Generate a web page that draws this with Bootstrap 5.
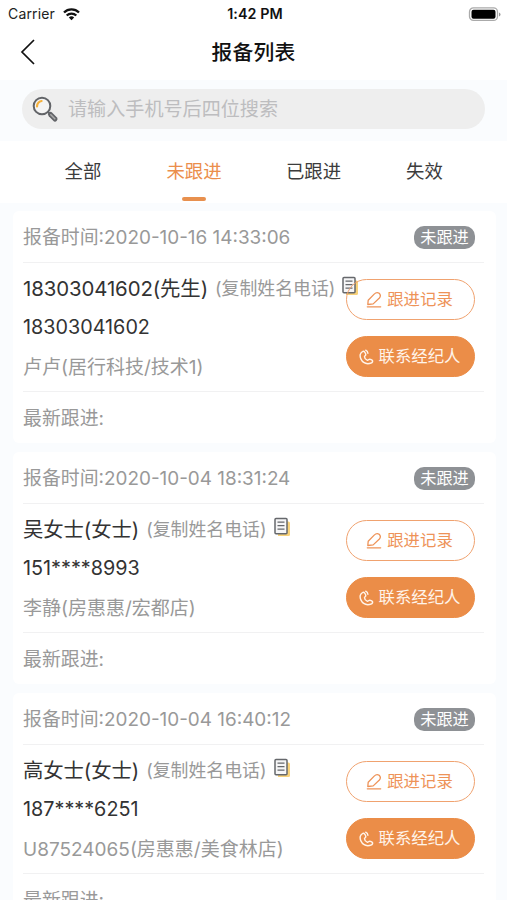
<!DOCTYPE html>
<html lang="zh-CN">
<head>
<meta charset="utf-8">
<meta name="viewport" content="width=device-width, initial-scale=1">
<title>报备列表</title>
<link href="https://cdn.jsdelivr.net/npm/bootstrap@5.3.0/dist/css/bootstrap.min.css" rel="stylesheet">
<style>
body{font-family:Inter,"Noto Sans CJK SC",sans-serif;background:#fafcfe;color:#333;height:900px;overflow:hidden}
.status{height:28px;padding:0 6px 0 8px;font-size:14px;line-height:28px;color:#222}
.status>*{flex:1}
.carrier{letter-spacing:.15px}
.clock{font-weight:600;font-size:14.3px;color:#111;letter-spacing:.1px;padding-left:1px}
.titlebar{height:52px;padding-left:20px;padding-right:52px}
.titlebar h1{font-size:20.8px;font-weight:500;color:#111;line-height:48px;letter-spacing:.2px;margin-top:-2px!important}
.titlebar svg{margin-top:-4px}
.search-wrap{height:61px;padding:9px 22px 0}
.search-box{height:40px;background:#eee;padding-left:10px;color:#bdbdbf;font-size:19.1px}
.search-box span{margin-left:9px}
.tabs{height:62px;font-size:18.4px;color:#3c3c3c;padding:0 32px 0 23px}
.tabs a{height:62px;color:inherit;line-height:60px}
.tabs a.on{color:#eb8e4c}
.tabs a.on::after{content:"";position:absolute;left:50%;bottom:2px;margin-left:-12px;width:24px;height:4px;border-radius:2px;background:#e8904e}
.list{padding:8px 11px 0 13px;gap:9px}
.report{height:232px;padding:0 12px 0 10px;border:0;border-radius:6px;flex:none}
.report-head{height:52px;border-bottom:1px solid #f1f1f2;font-size:18.9px;line-height:28px;color:#999;padding:2px 9px 0 0}
.tag{width:61px;height:23px;border-radius:10px;background:#8e9195;color:#fff;font-size:16.2px;line-height:23px;margin-top:-1px}
.report-body{height:129px;border-bottom:1px solid #f1f1f2;padding:6px 9px 0 0}
.line{height:39px;line-height:39px;font-size:19.8px;white-space:nowrap}
.who{font-size:20.4px;line-height:40px;letter-spacing:-.1px}
.copy{font-size:17.9px;letter-spacing:0;color:#999;margin-left:7px}
.line svg{margin:7px 0 0 7px}
.agent{font-size:19px;line-height:41px;color:#999}
.report-foot{height:51px;line-height:53px;font-size:18.9px;color:#999}
.info{width:323px}
.acts{gap:16px;padding-top:10px}
.pill{width:129px;height:41px;border-radius:21px;font-size:16.4px;padding:0 2px 0 0;border-width:1.5px;--bs-btn-color:#ee9358;--bs-btn-border-color:#f0a26f;--bs-btn-hover-color:#ee9358;gap:5px}
.pill-fill{background:#eb8d48;--bs-btn-color:#fff4ea;--bs-btn-border-color:#eb8d48}
svg{display:block;flex:none}
</style>
</head>
<body>
<svg width="0" height="0" class="position-absolute" aria-hidden="true">
<symbol id="i-copy" viewBox="0 0 17 20"><path d="M4 4.500h10.500a1.500 1.500 0 0 1 1.500 1.500v11.500a1.500 1.500 0 0 1-1.500 1.500H4z" fill="#f8d27a"/><rect x="1" y="1.500" width="12" height="15.300" rx="1" fill="#f6f6f7" stroke="#66686c" stroke-width="1.500"/><path d="M3.500 5.200h7M3.500 8.700h7M3.500 12.200h7" stroke="#66686c" stroke-width="1.300"/></symbol>
<symbol id="i-pen" viewBox="0 0 16 17"><path d="M1.800 13.500L2.200 9.300 8.200 3.100Q10.700.5 13.200 2.300 15.400 4.600 13.400 7L7.200 12.900zM1.300 15.800h13.400" fill="none" stroke="currentColor" stroke-width="1.300" stroke-linecap="round" stroke-linejoin="round"/></symbol>
<symbol id="i-tel" viewBox="0 0 15 16"><path d="M3.900 2.300C1 3.500.5 7 1.900 9.900c1.600 3.400 5 5.200 8.600 4.600 2-.3 3.200-1.700 3.100-2.600-.2-1-2.400-2-3.400-1.600-.8.300-1.100 1.200-2 .9C7 10.700 5.600 9 5.500 7.700c0-.8 1.300-1.100 1.300-2C6.800 4.500 5.400 1.700 3.900 2.300zM6.700 1.200c1.400.7 2.100 1.700 2.200 3" fill="none" stroke="currentColor" stroke-width="1.450" stroke-linecap="round"/></symbol>
</svg>

<header class="bg-white">
  <div class="status d-flex align-items-center">
    <div class="d-flex align-items-center"><span class="carrier">Carrier</span>
      <svg class="ms-2" width="17" height="13" viewBox="0 0 17 13"><g fill="none" stroke="#111" stroke-width="2.300"><path d="M1 4.500a10.600 10.600 0 0 1 15 0"/><path d="M3.700 7.500a6.900 6.900 0 0 1 9.600 0"/></g><path d="M8.500 12.300L5.800 9.500a3.900 3.900 0 0 1 5.400 0z" fill="#111"/></svg>
    </div>
    <div class="clock text-center">1:42 PM</div>
    <div class="d-flex justify-content-end"><svg width="33" height="15" viewBox="0 0 33 15"><rect x="1.500" y=".9" width="28" height="12.500" rx="4" fill="none" stroke="#aaa" stroke-width="1.300"/><rect x="3.500" y="2.700" width="24" height="9" rx="2" fill="#000"/><path d="M31 5.500q1.500.5 1.500 2t-1.500 2z" fill="#999"/></svg></div>
  </div>
  <div class="titlebar d-flex align-items-center">
    <svg width="16" height="28" viewBox="0 0 16 28"><path d="M14 2L2 14l12 12" fill="none" stroke="#111" stroke-width="1.700"/></svg>
    <h1 class="flex-fill text-center m-0 ps-3">报备列表</h1>
  </div>
</header>

<div class="search-wrap">
  <div class="search-box rounded-pill d-flex align-items-center">
    <svg width="27" height="27" viewBox="0 0 27 27"><circle cx="10" cy="10" r="8.300" fill="#f4f4f4" stroke="#626468" stroke-width="2"/><path d="M5 10.500Q5.200 6 9.600 5" fill="none" stroke="#f5b13c" stroke-width="2.200" stroke-linecap="round"/><path d="M15.800 15.800l3 3" stroke="#626468" stroke-width="2"/><path d="M18.500 18.500l4.500 4.500" stroke="#626468" stroke-width="5" stroke-linecap="round"/><path d="M18.800 18.800l4 4" stroke="#aaa" stroke-width="1.600" stroke-linecap="round"/></svg>
    <span>请输入手机号后四位搜索</span>
  </div>
</div>

<nav class="tabs bg-white d-flex">
  <a class="text-decoration-none text-center" style="width:120px">全部</a>
  <a class="on position-relative text-decoration-none text-center" style="width:102px">未跟进</a>
  <a class="text-decoration-none text-center" style="width:137px">已跟进</a>
  <a class="text-decoration-none text-center" style="width:85px">失效</a>
</nav>

<main class="list d-flex flex-column" id="list"></main>

<script>
const reports=[
 ['2020-10-16 14:33:06','18303041602(先生)','18303041602','卢卢(居行科技/技术1)'],
 ['2020-10-04 18:31:24','吴女士(女士)','151****8993','李静(房惠惠/宏都店)'],
 ['2020-10-04 16:40:12','高女士(女士)','187****6251','U87524065(房惠惠/美食林店)']
];
document.getElementById('list').innerHTML=reports.map(([time,name,tel,agent])=>`
<article class="card report">
  <div class="report-head d-flex align-items-center justify-content-between"><span>报备时间:${time}</span><span class="tag text-center">未跟进</span></div>
  <div class="report-body d-flex">
    <div class="info">
      <div class="line who d-flex"><span>${name}</span><span class="copy">(复制姓名电话)</span><svg width="17" height="20"><use href="#i-copy"/></svg></div>
      <div class="line">${tel}</div>
      <div class="line agent">${agent}</div>
    </div>
    <div class="acts d-flex flex-column">
      <button class="btn pill d-flex align-items-center justify-content-center"><svg width="16" height="17"><use href="#i-pen"/></svg>跟进记录</button>
      <button class="btn pill pill-fill d-flex align-items-center justify-content-center"><svg width="15" height="16"><use href="#i-tel"/></svg>联系经纪人</button>
    </div>
  </div>
  <div class="report-foot">最新跟进:</div>
</article>`).join('');
</script>
<script src="https://cdn.jsdelivr.net/npm/bootstrap@5.3.0/dist/js/bootstrap.bundle.min.js"></script>
</body>
</html>
